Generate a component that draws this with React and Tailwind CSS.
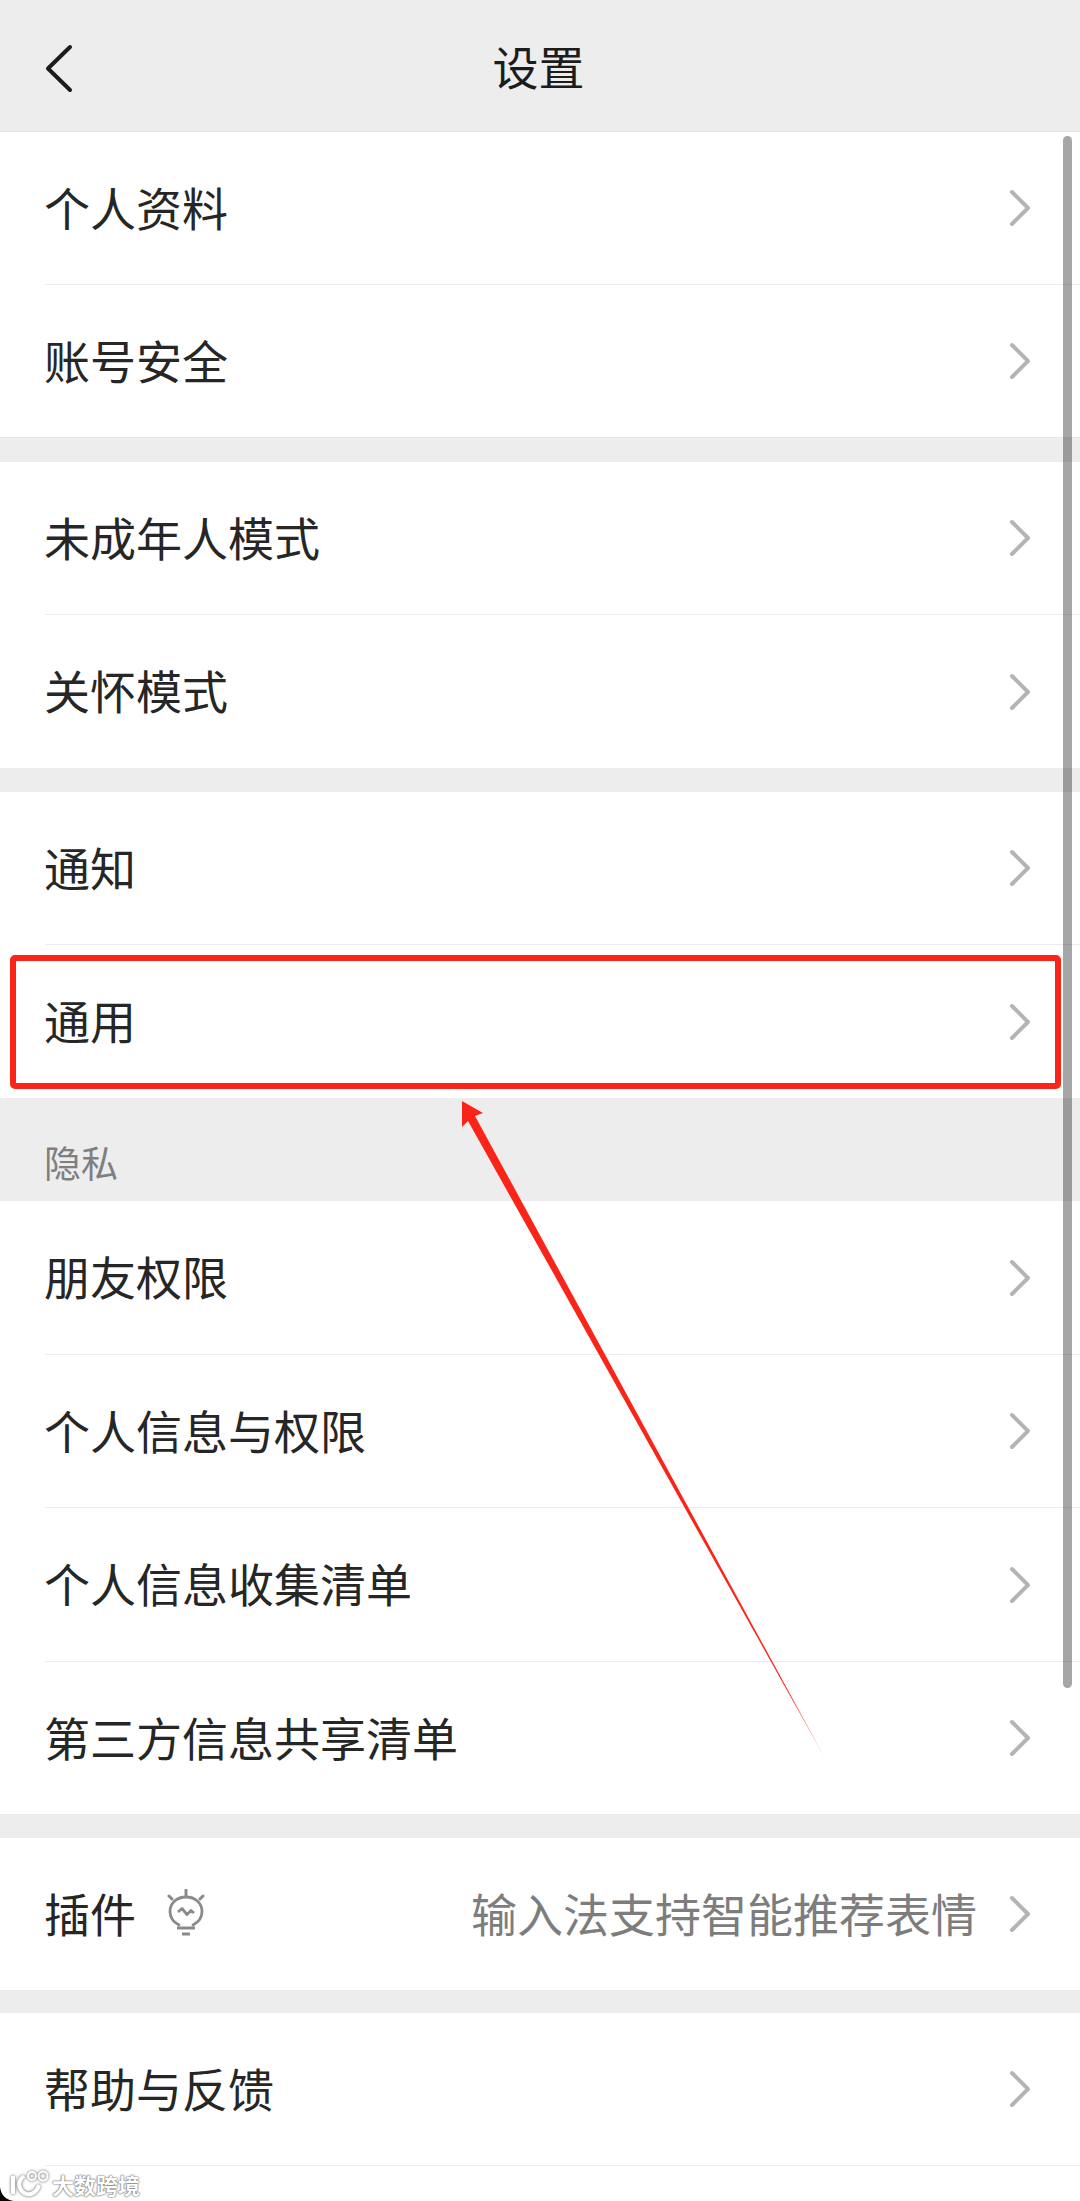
import { ChevronRight } from "lucide-react";

function Row({ label, value, icon, divider, height = "h-[153px]" }) {
  return (
    <div className={`${height} bg-white pl-[45px]`}>
      <div
        className={`h-full flex items-center pr-[28px] box-border ${
          divider ? "border-b border-[#ececec]" : ""
        }`}
      >
        <span className="-ml-[1px] -mt-[5px] text-[46px] leading-none font-normal text-[#262626]">{label}</span>
        {icon}
        {value && (
          <span className="ml-auto mr-[11px] -mt-[5px] text-[46px] leading-none font-normal text-[#7d7d7d]">
            {value}
          </span>
        )}
        <ChevronRight
          className={`${value ? "" : "ml-auto"} w-[64px] h-[64px] text-[#b4b4b4]`}
          strokeWidth={1.5}
        />
      </div>
    </div>
  );
}

function BulbIcon() {
  return (
    <svg className="ml-[28px] w-[44px] h-[50px]" viewBox="0 0 44 50" fill="none" stroke="#8a8a8a">
      <path d="M22 1v5M5 7l3 3M39 7l-3 3" strokeWidth="3" strokeLinecap="round" />
      <path
        d="M15 36c-5-2.500-9-7.500-9-13.500C6 14 13 8 22 8s16 6 16 14.500c0 6-4 11-9 13.500"
        strokeWidth="2.800"
        strokeLinecap="round"
      />
      <path d="M14 23l4-3.500 5 6 4-4 3 2.500" strokeWidth="2.800" strokeLinejoin="round" />
      <path d="M13 39h18" strokeWidth="3" />
      <path d="M18 45h8" strokeWidth="3" />
    </svg>
  );
}

function Arrow() {
  return (
    <svg className="absolute left-0 top-0 w-[1080px] h-[2201px] pointer-events-none" viewBox="0 0 1080 2201">
      <defs>
        <linearGradient id="tail" x1="462" y1="1101" x2="826" y2="1760" gradientUnits="userSpaceOnUse">
          <stop offset="0" stopColor="#fb2419" />
          <stop offset="0.9" stopColor="#fb2419" />
          <stop offset="1" stopColor="#fb2419" stopOpacity="0.4" />
        </linearGradient>
      </defs>
      <polygon
        points="462,1101 483,1113 475,1116 826,1760 468,1121 462,1127"
        fill="url(#tail)"
      />
    </svg>
  );
}

function Watermark() {
  return (
    <div className="absolute left-[10px] top-[2170px] flex items-center gap-[3px]">
      <svg className="w-[39px] h-[27px]" viewBox="0 0 39 27" fill="none" stroke="#fff" style={{ filter: "drop-shadow(0 0 1.5px #555)" }}>
        <path d="M3 6v18" strokeWidth="4" />
        <path d="M14 6c-4 3-6 7-4 12s8 8 13 5 5-5 6-8" strokeWidth="4" />
        <circle cx="22" cy="6" r="4" strokeWidth="2" />
        <circle cx="33" cy="6" r="4.500" strokeWidth="2" />
      </svg>
      <span className="text-[22px] leading-none font-bold text-white [text-shadow:0_0_2px_#555,0_0_1px_#555]">
        大数跨境
      </span>
    </div>
  );
}

export default function App() {
  return (
    <div className="relative w-[1080px] h-[2201px] overflow-hidden bg-white font-['Noto_Sans_CJK_SC','Noto_Sans',sans-serif]">
      {/* Header */}
      <header className="relative h-[132px] bg-[#ededed] border-b border-[#e4e4e4] box-border flex items-center justify-center">
        <svg className="absolute left-[44px] top-[44px] w-[30px] h-[50px]" viewBox="0 0 30 50" fill="none" stroke="#1c1c1c" strokeWidth="4" strokeLinecap="round" strokeLinejoin="round">
          <path d="M26 3L4 24.500 26 46" />
        </svg>
        <h1 className="-ml-[3px] -mt-[2px] text-[46px] leading-none font-normal text-[#1c1c1c]">设置</h1>
      </header>

      <main className="flex flex-col">
        <section className="border-b border-[#e6e6e6]">
          <Row label="个人资料" divider />
          <Row label="账号安全" height="h-[152px]" />
        </section>
        <div className="h-[24px] bg-[#ededed]" />
        <section>
          <Row label="未成年人模式" divider />
          <Row label="关怀模式" />
        </section>
        <div className="h-[24px] bg-[#ededed]" />
        <section>
          <Row label="通知" divider />
          <Row label="通用" />
        </section>
        <div className="h-[103px] bg-[#ededed] flex items-end pl-[44px] pb-[20px]">
          <span className="text-[37px] leading-none font-normal text-[#7f7f7f]">隐私</span>
        </div>
        <section>
          <Row label="朋友权限" divider height="h-[154px]" />
          <Row label="个人信息与权限" divider />
          <Row label="个人信息收集清单" divider height="h-[154px]" />
          <Row label="第三方信息共享清单" height="h-[152px]" />
        </section>
        <div className="h-[24px] bg-[#ededed]" />
        <section>
          <Row
            label="插件"
            value="输入法支持智能推荐表情"
            icon={<BulbIcon />}
            height="h-[152px]"
          />
        </section>
        <div className="h-[23px] bg-[#ededed]" />
        <section>
          <Row label="帮助与反馈" divider />
        </section>
      </main>

      {/* Scrollbar */}
      <div className="absolute left-[1063px] top-[136px] w-[9px] h-[1552px] rounded-full bg-black/35" />

      {/* Annotations */}
      <div className="absolute left-[10px] top-[955px] w-[1051px] h-[134px] border-[6px] border-[#fb2419] rounded-[5px]" />
      <Arrow />

      <Watermark />
      <svg className="absolute left-0 bottom-0 w-[14px] h-[14px]" viewBox="0 0 14 14">
        <path d="M0 0C1 8 6 13 14 14H0Z" fill="#000" />
      </svg>
    </div>
  );
}
